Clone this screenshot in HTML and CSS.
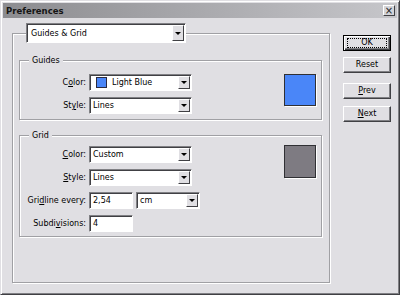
FILE: index.html
```html
<!DOCTYPE html>
<html lang="en">
<head>
    <meta charset="UTF-8">
    <title>Preferences</title>
    <link rel="stylesheet" href="styles.css">
</head>
<body>
    <div class="window">
        <div class="titlebar">
            <span class="title">Preferences</span>
            <span class="close">&times;</span>
        </div>

        <div class="dialog">
            <div class="panel">
                <!-- section picker sits on the panel border -->
                <div class="select select-main">
                    <span class="select-value">Guides &amp; Grid</span>
                    <span class="arrow"></span>
                </div>

                <div class="group group-guides">
                    <div class="group-title">Guides</div>
                    <div class="group-body">
                        <div class="fields">
                            <div class="row">
                                <label class="label">C<u>o</u>lor:</label>
                                <div class="select select-wide">
                                    <span class="select-value"><i class="chip"></i>Light Blue</span>
                                    <span class="arrow"></span>
                                </div>
                            </div>
                            <div class="row">
                                <label class="label">St<u>y</u>le:</label>
                                <div class="select select-wide">
                                    <span class="select-value">Lines</span>
                                    <span class="arrow"></span>
                                </div>
                            </div>
                        </div>
                        <div class="swatch swatch-blue"></div>
                    </div>
                </div>

                <div class="group group-grid">
                    <div class="group-title">Grid</div>
                    <div class="group-body">
                        <div class="fields">
                            <div class="row">
                                <label class="label"><u>C</u>olor:</label>
                                <div class="select select-wide">
                                    <span class="select-value">Custom</span>
                                    <span class="arrow"></span>
                                </div>
                            </div>
                            <div class="row">
                                <label class="label"><u>S</u>tyle:</label>
                                <div class="select select-wide">
                                    <span class="select-value">Lines</span>
                                    <span class="arrow"></span>
                                </div>
                            </div>
                            <div class="row">
                                <label class="label">Gri<u>d</u>line every:</label>
                                <div class="input">2,54</div>
                                <div class="select select-unit">
                                    <span class="select-value">cm</span>
                                    <span class="arrow"></span>
                                </div>
                            </div>
                            <div class="row">
                                <label class="label">Subdi<u>v</u>isions:</label>
                                <div class="input">4</div>
                            </div>
                        </div>
                        <div class="swatch swatch-gray"></div>
                    </div>
                </div>
            </div>

            <div class="buttons">
                <button class="btn btn-default"><span class="focus">OK</span></button>
                <button class="btn btn-reset">Reset</button>
                <button class="btn btn-prev"><u>P</u>rev</button>
                <button class="btn btn-next"><u>N</u>ext</button>
            </div>
        </div>
    </div>
</body>
</html>
```

FILE: styles.css
```css
html, body {
    margin: 0;
}

body {
    background: #e0dfe3;
    font-family: "DejaVu Sans", sans-serif;
    font-size: 8px;
    color: #000;
}

u {
    text-decoration: underline;
}

.window {
    width: 400px;
    height: 295px;
    box-sizing: border-box;
    padding: 2px;
    background: #e0dfe3;
    border: 1px solid;
    border-color: #e0dfe3 #404044 #404044 #e0dfe3;
    box-shadow: inset 1px 1px #fff, inset -1px -1px #808084;
}

.titlebar {
    height: 15px;
    display: flex;
    align-items: center;
    justify-content: space-between;
    padding: 0 2px 0 3px;
    background: linear-gradient(to right, #8c8c90, #c6c6ca);
}

.title {
    font-weight: bold;
    font-size: 8.5px;
    color: #151515;
}

.close {
    width: 12px;
    height: 11px;
    box-sizing: border-box;
    display: flex;
    align-items: center;
    justify-content: center;
    background: #d4d4d8;
    border: 1px solid;
    border-color: #fff #404044 #404044 #fff;
    font-size: 10px;
    line-height: 1;
    color: #222;
}

.dialog {
    display: flex;
    align-items: flex-start;
    padding: 15px 0 0 9px;
}

/* etched frames */
.panel,
.group {
    box-sizing: border-box;
    border: 1px solid #a0a0a4;
    box-shadow: inset 1px 1px #fff, 1px 1px #fff;
}

.panel {
    width: 318px;
    height: 250px;
}

.group {
    width: 303px;
    margin-left: 6px;
}

.group-guides {
    height: 60px;
    margin-top: 17px;
}

.group-grid {
    height: 102px;
    margin-top: 15px;
}

.group-title {
    display: table;
    margin: -6px 0 0 9px;
    padding: 0 3px;
    line-height: 11px;
    background: #e0dfe3;
}

.group-body {
    display: flex;
    align-items: flex-start;
}

.group-guides .group-body {
    padding-top: 8px;
}

.group-grid .group-body {
    padding-top: 5px;
}

.fields {
    display: flex;
    flex-direction: column;
    gap: 6px;
}

.row {
    display: flex;
    align-items: center;
    height: 17px;
}

.label {
    width: 66px;
    margin-right: 3px;
    text-align: right;
    white-space: nowrap;
}

/* sunken fields */
.select,
.input {
    box-sizing: border-box;
    height: 17px;
    display: flex;
    background: #fff;
    border: 1px solid;
    border-color: #808084 #fff #fff #808084;
    box-shadow: inset 1px 1px #404044;
}

.select {
    padding: 1px 1px 1px 3px;
}

.select-main {
    width: 160px;
    height: 20px;
    margin: -11px 0 0 13px;
    padding-left: 4px;
}

.select-wide {
    width: 103px;
}

.select-unit {
    width: 64px;
    margin-left: 3px;
}

.select-value {
    flex: 1;
    display: flex;
    align-items: center;
    white-space: nowrap;
}

.arrow {
    width: 12px;
    box-sizing: border-box;
    display: flex;
    align-items: center;
    justify-content: center;
    background: #e0dfe3;
    border: 1px solid;
    border-color: #fff #404044 #404044 #fff;
}

.arrow::after {
    content: "";
    border-left: 3px solid transparent;
    border-right: 3px solid transparent;
    border-top: 3px solid #000;
}

.chip {
    width: 11px;
    height: 11px;
    box-sizing: border-box;
    margin: 0 5px 0 3px;
    background: #4a86f8;
    border: 1px solid #2a2a40;
}

.input {
    width: 44px;
    align-items: center;
    padding-left: 3px;
}

.swatch {
    width: 32px;
    height: 32px;
    box-sizing: border-box;
    margin: 0 5px 0 auto;
    border: 1px solid #303034;
    box-shadow: 1px 1px #fff;
}

.swatch-blue {
    background: #4a86f8;
}

.swatch-gray {
    margin-top: -1px;
    height: 33px;
    background: #7e7b82;
}

.buttons {
    display: flex;
    flex-direction: column;
    margin: 2px 0 0 13px;
}

.btn {
    width: 48px;
    height: 16px;
    box-sizing: border-box;
    padding: 0;
    font: inherit;
    line-height: 1;
    color: #000;
    background: #e0dfe3;
    border: 1px solid;
    border-color: #fff #404044 #404044 #fff;
    box-shadow: inset -1px -1px #808084;
}

.btn-default {
    border: 1px solid #000;
    box-shadow: inset 1px 1px #fff, inset -1px -1px #404044, inset -2px -2px #808084;
    padding: 2px 3px;
    display: flex;
}

.focus {
    flex: 1;
    display: flex;
    align-items: center;
    justify-content: center;
    outline: 1px dotted #000;
    outline-offset: -1px;
}

.btn-reset {
    margin-top: 6px;
}

.btn-prev {
    margin-top: 10px;
}

.btn-next {
    margin-top: 7px;
}
```
